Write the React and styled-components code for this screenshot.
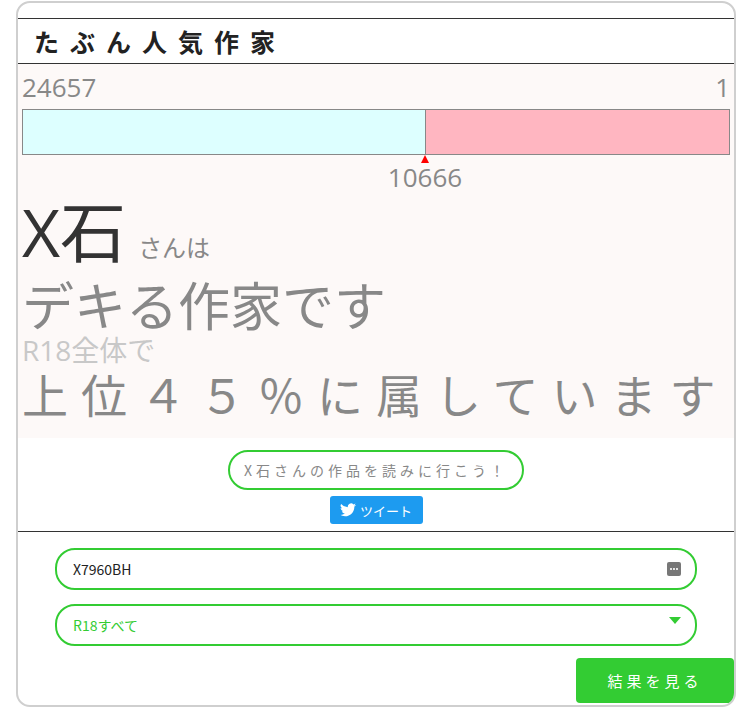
import React from 'react'
import styled, { createGlobalStyle } from 'styled-components'

const Global = createGlobalStyle`
  body { margin: 0; background: #fff; font-family: "Noto Sans CJK JP", "Noto Sans", sans-serif; }
`

const Card = styled.div`
  box-sizing: border-box;
  width: 720px;
  margin: 1px 0 0 16px;
  height: 706px;
  border: 2px solid #cfcfcf;
  border-radius: 14px;
  overflow: hidden;
  padding-top: 15px;
`
const Header = styled.h1`
  margin: 0;
  border-top: 1px solid #333;
  border-bottom: 1px solid #333;
  height: 44px;
  display: flex;
  align-items: center;
  padding-left: 16px;
  font-size: 25px;
  font-weight: 700;
  letter-spacing: 11px;
  color: #222;
`
const Result = styled.div`
  background: #fdf9f8;
  padding: 6px 4px 0 4px;
  height: 368px;
  color: #888;
  font-family: "Open Sans", "Noto Sans CJK JP", sans-serif;
  font-weight: 400;
`
const Ends = styled.div`
  display: flex;
  justify-content: space-between;
  font-size: 26px;
  line-height: 34px;
`
const Bar = styled.div`
  margin-top: 5px;
  height: 44px;
  border: 1px solid #888;
  display: flex;
  position: relative;
`
const Seg = styled.div`
  background: ${(p) => p.color};
  border-left: ${(p) => (p.split ? '1px solid #888' : 'none')};
`
const Marker = styled.div`
  position: absolute;
  top: 45px;
  transform: translateX(-4px);
  width: 0;
  height: 0;
  border-left: 4px solid transparent;
  border-right: 4px solid transparent;
  border-bottom: 8px solid red;
`
const Rank = styled.div`
  font-size: 26px;
  line-height: 32px;
  transform: translateX(-50%);
  width: fit-content;
`
const Name = styled.div`
  color: #333;
  font-size: 66px;
  line-height: 72px;
  margin-top: 2px;
  span { font-size: 24px; color: #888; margin-left: 12px; }
`
const Big = styled.div`
  font-size: 52px;
  line-height: 56px;
  margin-top: -6px;
`
const Small = styled.div`
  color: #c8c8c8;
  font-size: 28px;
  line-height: 32px;
`
const Wide = styled.div`
  font-size: 46px;
  line-height: 58px;
  letter-spacing: 13px;
  white-space: nowrap;
`
const Share = styled.div`
  display: flex;
  flex-direction: column;
  align-items: center;
  padding: 12px 0 7px;
  gap: 6px;
  border-bottom: 1px solid #333;
`
const Pill = styled.div`
  border: 2px solid #33cc33;
  border-radius: 20px;
  padding: 0 14px;
  height: 36px;
  display: flex;
  align-items: center;
  font-size: 14px;
  letter-spacing: 4px;
  color: #888;
`
const Tweet = styled.div`
  background: #1d9bf0;
  color: #fff;
  border-radius: 3px;
  height: 28px;
  width: 93px;
  display: flex;
  align-items: center;
  justify-content: center;
  gap: 4px;
  font-size: 13px;
`
const Form = styled.div`
  padding: 16px 37px 0;
  display: flex;
  flex-direction: column;
  gap: 14px;
`
const Field = styled.div`
  height: 38px;
  border: 2px solid #33cc33;
  border-radius: 20px;
  display: flex;
  align-items: center;
  justify-content: space-between;
  padding: 0 14px 0 16px;
  font-size: 14px;
  color: ${(p) => p.color};
`
const Footer = styled.div`
  display: flex;
  justify-content: flex-end;
  margin-top: 12px;
`
const Submit = styled.div`
  width: 158px;
  height: 45px;
  background: #33cc33;
  color: #fff;
  border-radius: 4px;
  display: flex;
  align-items: center;
  justify-content: center;
  font-size: 15px;
  letter-spacing: 4px;
`

const pos = 402

export default function App() {
  return (
    <>
      <Global />
      <Card>
        <Header>たぶん人気作家</Header>
        <Result>
          <Ends><span>24657</span><span>1</span></Ends>
          <Bar>
            <Seg color="#ddffff" style={{ width: pos }} />
            <Seg color="#ffb6c1" split style={{ flex: 1 }} />
            <Marker style={{ left: pos }} />
          </Bar>
          <Rank style={{ marginLeft: pos + 1, marginTop: 6 }}>10666</Rank>
          <Name>X石<span>さんは</span></Name>
          <Big>デキる作家です</Big>
          <Small>R18全体で</Small>
          <Wide>上位４５％に属しています</Wide>
        </Result>
        <Share>
          <Pill>X石さんの作品を読みに行こう！</Pill>
          <Tweet>
            <svg width="16" height="14" viewBox="0 0 24 20" fill="#fff">
              <path d="M24 2.4a9.8 9.8 0 0 1-2.8.8A4.9 4.9 0 0 0 23.3.4a9.9 9.9 0 0 1-3.1 1.2A4.9 4.9 0 0 0 11.8 6 14 14 0 0 1 1.7.9a4.9 4.9 0 0 0 1.5 6.6A4.9 4.9 0 0 1 1 6.9a4.9 4.9 0 0 0 3.9 4.8 4.9 4.9 0 0 1-2.2.1 4.9 4.9 0 0 0 4.6 3.4A9.9 9.9 0 0 1 0 17.3 14 14 0 0 0 7.5 19.5c9.1 0 14-7.5 14-14v-.6A10 10 0 0 0 24 2.4z" />
            </svg>
            ツイート
          </Tweet>
        </Share>
        <Form>
          <Field color="#222">
            X7960BH
            <svg width="14" height="14" viewBox="0 0 14 14">
              <rect width="14" height="14" rx="2" fill="#777" />
              <circle cx="4" cy="7" r="1.1" fill="#fff" />
              <circle cx="7" cy="7" r="1.1" fill="#fff" />
              <circle cx="10" cy="7" r="1.1" fill="#fff" />
            </svg>
          </Field>
          <Field color="#33cc33">
            R18すべて
            <svg width="12" height="8" viewBox="0 0 12 8" style={{ marginTop: -8 }}>
              <path d="M0 0h12L6 7z" fill="#33cc33" />
            </svg>
          </Field>
        </Form>
        <Footer><Submit>結果を見る</Submit></Footer>
      </Card>
    </>
  )
}
